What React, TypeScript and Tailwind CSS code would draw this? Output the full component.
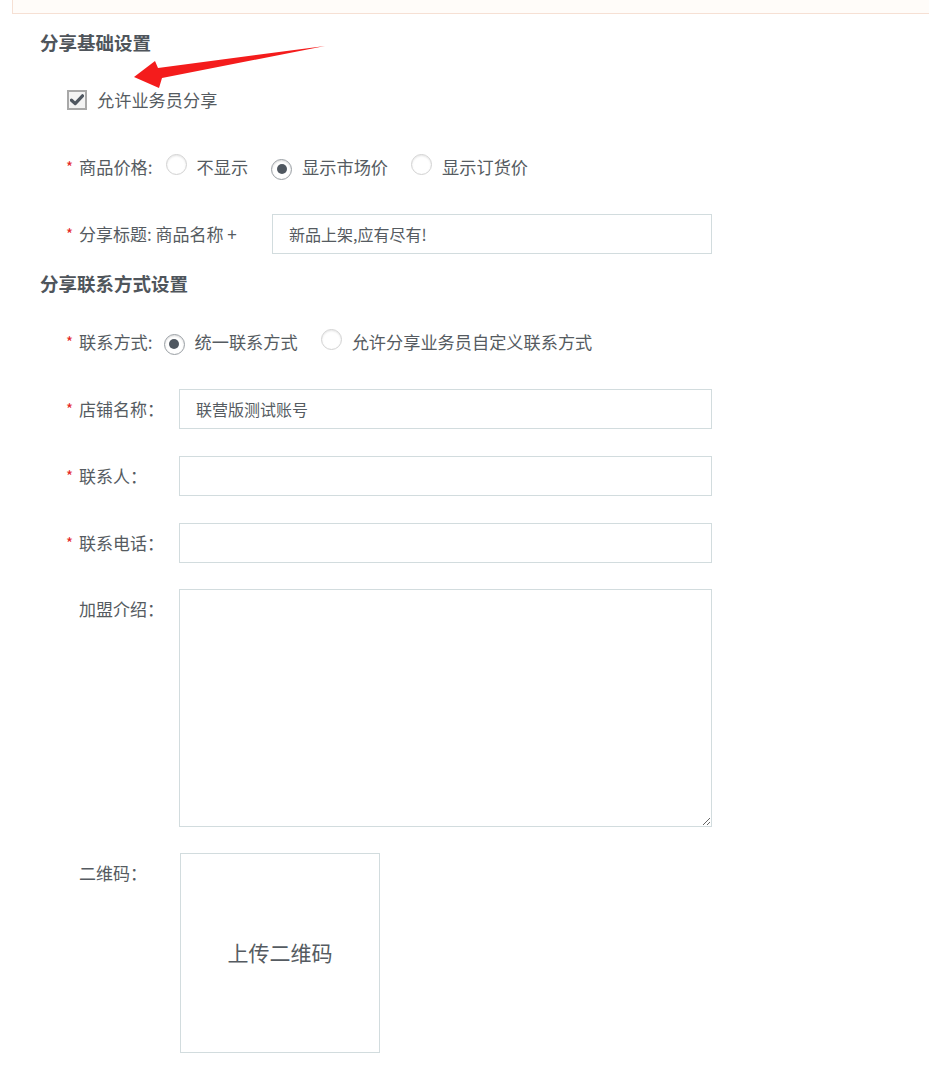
import React from "react";

const font = { fontFamily: '"Noto Sans CJK SC", "Noto Sans", sans-serif' };

function Radio({ checked }: { checked?: boolean }) {
  return (
    <span
      className={
        "inline-flex h-[21px] w-[21px] shrink-0 items-center justify-center rounded-full border bg-white " +
        (checked
          ? "border-[#9a9fa4] shadow-[inset_0_1px_2px_rgba(0,0,0,0.15)]"
          : "border-[#d2d2d2] shadow-[inset_0_1px_2px_rgba(0,0,0,0.1)]")
      }
    >
      {checked && <span className="h-[10px] w-[10px] rounded-full bg-[#4f5760]" />}
    </span>
  );
}

function Star() {
  return <span className="inline-block w-[13px] text-[15px] text-[#e5261f]">*</span>;
}

function InputRow({
  label,
  required,
  value,
}: {
  label: string;
  required?: boolean;
  value?: string;
}) {
  return (
    <div className="flex items-start pl-[26px]">
      <div className="flex h-[40px] w-[113px] items-center">
        {required ? <Star /> : <span className="inline-block w-[13px]" />}
        <span className="text-[17px] text-[#555b61]">{label}</span>
      </div>
      <div className="flex h-[40px] w-[533px] items-center border border-[#d2dcde] bg-white pl-[16px] text-[16px] text-[#555b61]">
        {value}
      </div>
    </div>
  );
}

export default function App() {
  return (
    <div className="relative min-h-[1069px] w-[929px] bg-white" style={font}>
      <div className="ml-[12px] h-[14px] border-b border-l border-[#f6e0d4] bg-[#fffcf9]" />

      <div className="pl-[40px]">
        <div className="mt-[16px] h-[24px] text-[18.5px] font-bold leading-[24px] text-[#4f555b]">
          分享基础设置
        </div>

        <div className="mt-[36px] flex h-[20px] items-center pl-[27px]">
          <span className="flex h-[20px] w-[20px] items-center justify-center border-2 border-[#a8a8a8] bg-[#f3f3f3]">
            <svg width="14" height="12" viewBox="0 0 14 12">
              <path d="M1.5 6.2 L5.2 9.6 L12.5 1.8" fill="none" stroke="#4f5760" strokeWidth="3.2" strokeLinecap="round" strokeLinejoin="round" />
            </svg>
          </span>
          <span className="ml-[10px] text-[17.2px] text-[#555b61]">允许业务员分享</span>
        </div>

        <div className="mt-[37px] flex h-[40px] items-center pl-[26px] text-[17.2px] text-[#555b61]">
          <Star />
          <span>商品价格:</span>
          <span className="ml-[13px]"><Radio /></span>
          <span className="ml-[10px]">不显示</span>
          <span className="ml-[23px]"><Radio checked /></span>
          <span className="ml-[10px]">显示市场价</span>
          <span className="ml-[23px]"><Radio /></span>
          <span className="ml-[10px]">显示订货价</span>
        </div>

        <div className="mt-[27px] flex items-start pl-[26px]">
          <div className="flex h-[40px] w-[206px] items-center text-[17px] text-[#555b61]">
            <Star />
            <span>分享标题: 商品名称 +</span>
          </div>
          <div className="flex h-[40px] w-[440px] items-center border border-[#d2dcde] bg-white pl-[16px] text-[16px] text-[#555b61]">
            新品上架,应有尽有!
          </div>
        </div>

        <div className="mt-[17px] h-[24px] text-[18.5px] font-bold leading-[24px] text-[#4f555b]">
          分享联系方式设置
        </div>

        <div className="mt-[27px] flex h-[40px] items-center pl-[26px] text-[17.2px] text-[#555b61]">
          <Star />
          <span>联系方式:</span>
          <span className="ml-[11px]"><Radio checked /></span>
          <span className="ml-[10px]">统一联系方式</span>
          <span className="ml-[23px]"><Radio /></span>
          <span className="ml-[10px]">允许分享业务员自定义联系方式</span>
        </div>

        <div className="mt-[27px]">
          <InputRow label="店铺名称：" required value="联营版测试账号" />
        </div>
        <div className="mt-[27px]">
          <InputRow label="联系人：" required />
        </div>
        <div className="mt-[27px]">
          <InputRow label="联系电话：" required />
        </div>

        <div className="mt-[26px] flex items-start pl-[26px]">
          <div className="flex h-[40px] w-[113px] items-center">
            <span className="inline-block w-[13px]" />
            <span className="text-[17px] text-[#555b61]">加盟介绍：</span>
          </div>
          <textarea className="block h-[238px] w-[533px] resize border border-[#d2dcde] bg-white outline-none" />
        </div>

        <div className="mt-[26px] flex items-start pl-[26px]">
          <div className="flex h-[40px] w-[114px] items-center">
            <span className="inline-block w-[13px]" />
            <span className="text-[17px] text-[#555b61]">二维码：</span>
          </div>
          <div className="flex h-[200px] w-[200px] items-center justify-center border border-[#d2dcde] bg-white text-[21px] text-[#555b61]">
            上传二维码
          </div>
        </div>
      </div>

      <svg
        className="pointer-events-none absolute left-0 top-0"
        width="929"
        height="100"
        viewBox="0 0 929 100"
      >
        <polygon points="134,77 155,61 158,68 325,46 162,78 159,88" fill="#f41c1c" />
      </svg>
    </div>
  );
}
